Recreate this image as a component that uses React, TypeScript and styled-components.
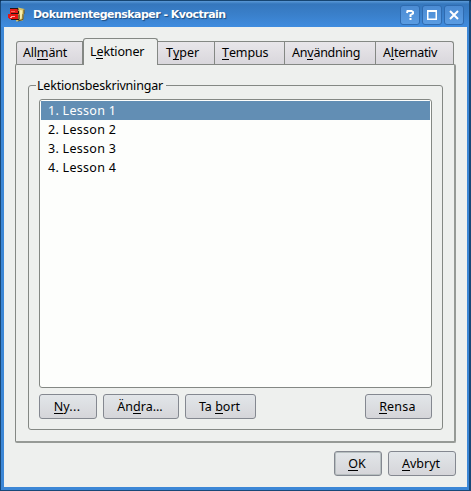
import React from 'react';
import styled, { createGlobalStyle, css } from 'styled-components';

const Global = createGlobalStyle`
  * { box-sizing: border-box; }
  html, body { margin: 0; padding: 0; overflow: hidden; background: #0b2a4a; }
  u { text-decoration: none; box-shadow: inset 0 -1px 0 currentColor; display: inline-block; line-height: 15px; letter-spacing: 0; }
`;

const Window = styled.main`
  width: 471px;
  height: 491px;
  display: flex;
  flex-direction: column;
  padding: 0 2px 3px 3px;
  border: 1px solid #184878;
  border-right-width: 2px;
  border-top-color: #164572;
  border-radius: 3px 3px 0 0;
  background: #3c87d6;
  font: 12.5px/19px 'Noto Sans', sans-serif;
  color: #000;
  cursor: default;
  user-select: none;
`;

const TitleBar = styled.header`
  height: 26px;
  flex: none;
  margin: 0 -2px 0 -3px;
  padding: 2px 5px 0 7px;
  display: flex;
  align-items: center;
  background: linear-gradient(#5b9ad8 0, #3577bd 3px, #3a80cb 14px, #3f8cdf 100%);
`;

const Title = styled.h1`
  flex: 1;
  min-width: 0;
  margin: 0 0 0 7px;
  font: bold 11px/20px 'DejaVu Sans', sans-serif;
  letter-spacing: -0.52px;
  white-space: nowrap;
  color: #fff;
  text-shadow: 1px 1px 1px #1d4a7c;
`;

const TitleButton = styled.button`
  width: 20px;
  height: 20px;
  margin: 0 0 0 2px;
  padding: 0;
  flex: none;
  border: 1px solid #2f6bb0;
  border-radius: 3px;
  background: linear-gradient(#4b8bd3, #5a9ce2);
  display: grid;
  place-items: center;
`;

const Body = styled.div`
  flex: 1;
  padding: 11px 11px 0;
  background: #eef0ee;
  display: flex;
  flex-direction: column;
`;

const Tabs = styled.nav`
  height: 26px;
  flex: none;
  display: flex;
  align-items: flex-end;
  padding-left: 1px;
`;

const Tab = styled.div<{ $w: number; $pad: number; $ls?: number; $active?: boolean }>`
  width: ${p => p.$w}px;
  height: 23px;
  padding-left: ${p => p.$pad}px;
  letter-spacing: ${p => p.$ls ?? 0}px;
  line-height: 21px;
  white-space: nowrap;
  border: 1px solid #848884;
  border-width: 1px 1px 0 0;
  background: linear-gradient(#e8e6ea, #d9d7dc);
  &:first-child { border-left-width: 1px; border-top-left-radius: 3px; }
  &:last-child { border-top-right-radius: 3px; }
  ${p => p.$active && css`
    height: 27px;
    margin-bottom: -1px;
    position: relative;
    border-radius: 3px 3px 0 0;
    border-width: 1px 1px 0 1px;
    line-height: 25px;
    background: #eef0ee;
  `}
`;

const Pane = styled.section`
  height: 379px;
  flex: none;
  padding: 20px 11px 11px 12px;
  border: 1px solid #848884;
  border-right: 2px solid #969a96;
  border-bottom: 2px solid #969a96;
  border-radius: 2px;
`;

const Group = styled.div`
  height: 345px;
  padding: 0 10px;
  border: 1px solid #848884;
  border-radius: 3px;
`;

const Legend = styled.div`
  width: fit-content;
  height: 19px;
  margin: -10px 0 4px -3px;
  padding: 0 3px 0 1px;
  letter-spacing: -0.19px;
  background: #eef0ee;
`;

const List = styled.ul`
  height: 289px;
  margin: 0;
  padding: 1px;
  list-style: none;
  border: 1px solid #848884;
  border-radius: 3px;
  background: #fdfefc;
`;

const Item = styled.li<{ $selected?: boolean }>`
  height: 19px;
  padding-left: 7px;
  letter-spacing: 0.28px;
  ${p => p.$selected && css`background: #628eb4; color: #fff;`}
`;

const Actions = styled.div`
  display: flex;
  gap: 6px;
  margin-top: 6px;
`;

const Button = styled.button<{ $w: number; $ls?: number; $end?: boolean; $default?: boolean }>`
  width: ${p => p.$w}px;
  height: 25px;
  flex: none;
  margin: 0 0 0 ${p => (p.$end ? 'auto' : '0')};
  padding: 0 2px 0 0;
  border: 1px solid #848890;
  border-radius: 3px;
  background: linear-gradient(#e2e6e9, #d5d5d9);
  box-shadow: ${p => (p.$default ? 'inset 0 0 0 1px #b7bfc0' : 'none')};
  font: inherit;
  color: #000;
  letter-spacing: ${p => p.$ls ?? 0}px;
`;

const Footer = styled.footer`
  display: flex;
  justify-content: flex-end;
  gap: 6px;
  margin-top: 8px;
`;

const Icon = styled.svg`
  flex: none;
  display: block;
`;

const AppIcon = () => (
  <Icon width="18" height="18" viewBox="0 0 18 18">
    <path d="M10 1.500 16.500 3 15 14.500 8 15.500z" fill="#d9c465" />
    <path d="M12 4 14.500 4.500 13.500 12.500 12 13z" fill="#f6edb0" />
    <path d="M16 3.500v4l-1 1v5l-5 1.500" fill="none" stroke="#5c4b1c" />
    <path d="M2 3h8v2h1v3H2z" fill="#e51b17" />
    <path d="M2 2.500h8v2M10.500 5v2.500H3M11 8.500v5H3" fill="none" stroke="#281610" />
    <path d="M0 8h10v5H1V12H0z" fill="#e71410" />
    <path d="M3 10h4v1H4v1H2v-1h1z" fill="#ffab9f" />
    <path d="M3 5h4v1H3z" fill="#ff6454" />
  </Icon>
);

const Glyph = ({ d }: { d: string }) => (
  <Icon width="14" height="14" viewBox="0 0 14 14" fill="none" stroke="#fff" strokeWidth="2">
    <path d={d} />
  </Icon>
);

const lessons = ['Lesson 1', 'Lesson 2', 'Lesson 3', 'Lesson 4'];

export default function App() {
  return (
    <>
      <Global />
      <Window>
        <TitleBar>
          <AppIcon />
          <Title>Dokumentegenskaper - Kvoctrain</Title>
          <TitleButton aria-label="help"><Glyph d="M4 5l.5-2h4L10 4v1.500L7.500 7v2M7.500 10v2" /></TitleButton>
          <TitleButton aria-label="maximize">
            <Icon width="14" height="14" viewBox="0 0 14 14">
              <path d="M2 2h10v10H2zM3.500 4v6.500h7V4z" fill="#fff" fillRule="evenodd" />
            </Icon>
          </TitleButton>
          <TitleButton aria-label="close"><Glyph d="M3 3l8 8M11 3l-8 8" /></TitleButton>
        </TitleBar>
        <Body>
          <Tabs>
            <Tab $w={67} $pad={6} $ls={-0.25}>All<u>m</u>änt</Tab>
            <Tab $w={75} $pad={6} $ls={-0.15} $active>L<u>e</u>ktioner</Tab>
            <Tab $w={57} $pad={8}>T<u>y</u>per</Tab>
            <Tab $w={70} $pad={7} $ls={-0.15}><u>T</u>empus</Tab>
            <Tab $w={91} $pad={7} $ls={-0.3}>An<u>v</u>ändning</Tab>
            <Tab $w={78} $pad={7} $ls={-0.3}>A<u>l</u>ternativ</Tab>
          </Tabs>
          <Pane>
            <Group>
              <Legend>Lektionsbeskrivningar</Legend>
              <List>
                {lessons.map((name, i) => (
                  <Item key={name} $selected={i === 0}>{i + 1}. {name}</Item>
                ))}
              </List>
              <Actions>
                <Button $w={58} $ls={0.3}><u>N</u>y...</Button>
                <Button $w={76}>Än<u>d</u>ra...</Button>
                <Button $w={71}>Ta <u>b</u>ort</Button>
                <Button $w={67} $ls={0.2} $end><u>R</u>ensa</Button>
              </Actions>
            </Group>
          </Pane>
          <Footer>
            <Button $w={48} $ls={-0.2} $default><u>O</u>K</Button>
            <Button $w={68}><u>A</u>vbryt</Button>
          </Footer>
        </Body>
      </Window>
    </>
  );
}
